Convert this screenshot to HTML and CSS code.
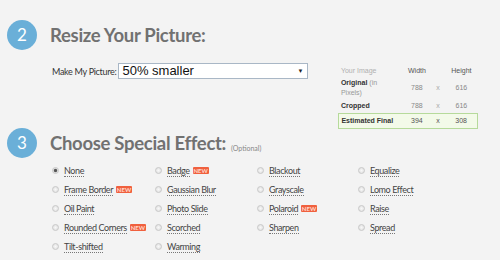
FILE: index.html
```html
<!DOCTYPE html>
<html lang="en">
<head>
    <meta charset="UTF-8">
    <title>Resize</title>
    <link rel="stylesheet" href="styles.css">
</head>
<body>
    <div class="step">
        <div class="step-head">
            <span class="num">2</span>
            <h2>Resize Your Picture:</h2>
        </div>
        <div class="resize-body">
            <div class="make">
                <label>Make My Picture:</label>
                <div class="select">50% smaller<span class="arrow">&#9660;</span></div>
            </div>
            <table class="dims">
                <colgroup>
                    <col class="c-name">
                    <col class="c-w">
                    <col class="c-x">
                    <col class="c-h">
                </colgroup>
                <tr class="head">
                    <td class="name">Your Image</td>
                    <td>Width</td>
                    <td class="x"></td>
                    <td>Height</td>
                </tr>
                <tr class="orig">
                    <td class="name"><b>Original</b> (in<br>Pixels)</td>
                    <td>788</td>
                    <td class="x">x</td>
                    <td>616</td>
                </tr>
                <tr class="crop">
                    <td class="name"><b>Cropped</b></td>
                    <td>788</td>
                    <td class="x">x</td>
                    <td>616</td>
                </tr>
                <tr class="final">
                    <td class="name"><b>Estimated Final</b></td>
                    <td>394</td>
                    <td class="x">x</td>
                    <td>308</td>
                </tr>
            </table>
        </div>
    </div>

    <div class="step">
        <div class="step-head">
            <span class="num">3</span>
            <h2>Choose Special Effect:</h2>
            <span class="opt">(Optional)</span>
        </div>
        <div class="effects">
            <div class="effect"><span class="radio on"></span><span class="lbl">None</span></div>
            <div class="effect"><span class="radio"></span><span class="lbl">Badge</span><span class="new">NEW</span></div>
            <div class="effect"><span class="radio"></span><span class="lbl">Blackout</span></div>
            <div class="effect"><span class="radio"></span><span class="lbl">Equalize</span></div>

            <div class="effect"><span class="radio"></span><span class="lbl">Frame Border</span><span class="new">NEW</span></div>
            <div class="effect"><span class="radio"></span><span class="lbl">Gaussian Blur</span></div>
            <div class="effect"><span class="radio"></span><span class="lbl">Grayscale</span></div>
            <div class="effect"><span class="radio"></span><span class="lbl">Lomo Effect</span></div>

            <div class="effect"><span class="radio"></span><span class="lbl">Oil Paint</span></div>
            <div class="effect"><span class="radio"></span><span class="lbl">Photo Slide</span></div>
            <div class="effect"><span class="radio"></span><span class="lbl">Polaroid</span><span class="new">NEW</span></div>
            <div class="effect"><span class="radio"></span><span class="lbl">Raise</span></div>

            <div class="effect"><span class="radio"></span><span class="lbl">Rounded Corners</span><span class="new">NEW</span></div>
            <div class="effect"><span class="radio"></span><span class="lbl">Scorched</span></div>
            <div class="effect"><span class="radio"></span><span class="lbl">Sharpen</span></div>
            <div class="effect"><span class="radio"></span><span class="lbl">Spread</span></div>

            <div class="effect"><span class="radio"></span><span class="lbl">Tilt-shifted</span></div>
            <div class="effect"><span class="radio"></span><span class="lbl">Warming</span></div>
        </div>
    </div>
</body>
</html>
```

FILE: styles.css
```css
body {
    margin: 0;
    padding: 20px 0 0 7px;
    background-color: #f3f3f3;
    font-family: Lato, 'Open Sans', sans-serif;
    color: #444;
}
.step-head {
    display: flex;
    align-items: center;
    height: 30px;
}
.num {
    width: 30px;
    height: 30px;
    border-radius: 50%;
    background-color: #6aafd8;
    color: white;
    font-size: 17px;
    line-height: 30px;
    text-align: center;
    flex: none;
}
h2 {
    margin: 0 0 0 13px;
    font-size: 18.5px;
    letter-spacing: -0.3px;
    font-weight: bold;
    color: #717171;
}
.opt {
    font-size: 7px;
    color: #888;
    margin: 9px 0 0 5px;
}

/* resize */
.resize-body {
    display: flex;
    align-items: flex-start;
    margin-top: 13px;
    height: 65px;
}
.make {
    display: flex;
    align-items: center;
    margin-left: 45px;
}
.make label {
    font-size: 9px;
    letter-spacing: -0.3px;
    color: #333;
    margin-right: 2px;
}
.select {
    box-sizing: border-box;
    width: 190px;
    height: 16px;
    padding: 0 0 0 3px;
    border: 1px solid #a9b7c6;
    background-color: white;
    font-family: 'Liberation Sans', Arial, sans-serif;
    font-size: 13px;
    line-height: 14px;
    color: #111;
    display: flex;
    justify-content: space-between;
}
.arrow {
    font-size: 6px;
    margin-right: 4px;
    color: #222;
}
.dims {
    margin: 1px 0 0 30px;
    width: 139px;
    table-layout: fixed;
    border-collapse: collapse;
    font-family: 'Liberation Sans', Arial, sans-serif;
    font-size: 7px;
    line-height: 10px;
    color: #888;
}
.c-name { width: 64px; }
.c-w { width: 28px; }
.c-x { width: 14px; }
.c-h { width: 33px; }
.dims td {
    padding: 0 3px;
    text-align: center;
    white-space: nowrap;
}
.dims td.name {
    text-align: left;
    padding-left: 2px;
    color: #999;
    white-space: normal;
}
.dims td.x {
    color: #aaa;
}
.dims tr.head { height: 13px; }
.dims tr.orig { height: 22px; }
.dims tr.crop { height: 14px; }
.dims tr.final { height: 15px; }
.dims tr.head td {
    color: #555;
}
.dims tr.head td.name {
    color: #b0b0b0;
}
.dims b {
    color: #333;
}
.dims tr.final td {
    background-color: #f3fae9;
    border-top: 1px solid #b6da9b;
    border-bottom: 1px solid #b6da9b;
    color: #555;
}
.dims tr.final td:first-child {
    border-left: 1px solid #b6da9b;
}
.dims tr.final td:last-child {
    border-right: 1px solid #b6da9b;
}

/* effects */
.effects {
    display: grid;
    grid-template-columns: 103px 102px 101px 100px;
    grid-auto-rows: 19px;
    margin: 3px 0 0 45px;
}
.effect {
    display: flex;
    align-items: center;
    font-size: 9px;
    letter-spacing: -0.4px;
    color: #444;
}
.radio {
    box-sizing: border-box;
    width: 7px;
    height: 7px;
    border-radius: 50%;
    border: 1px solid #c8c8c8;
    background: radial-gradient(circle, #f8f8f8 0, #dcdcdc 100%);
    margin-right: 5px;
    flex: none;
}
.radio.on {
    background: radial-gradient(circle, #555 0, #555 35%, #e0e0e0 60%);
}
.lbl {
    border-bottom: 1px dotted #777;
    line-height: 10px;
    margin-top: 2px;
}
.new {
    margin-left: 3px;
    width: 16px;
    height: 7px;
    background-color: #f0603e;
    color: #ffd9cc;
    font-size: 6px;
    font-weight: bold;
    letter-spacing: 0;
    line-height: 7px;
    text-align: center;
    border-radius: 1px;
}
```
